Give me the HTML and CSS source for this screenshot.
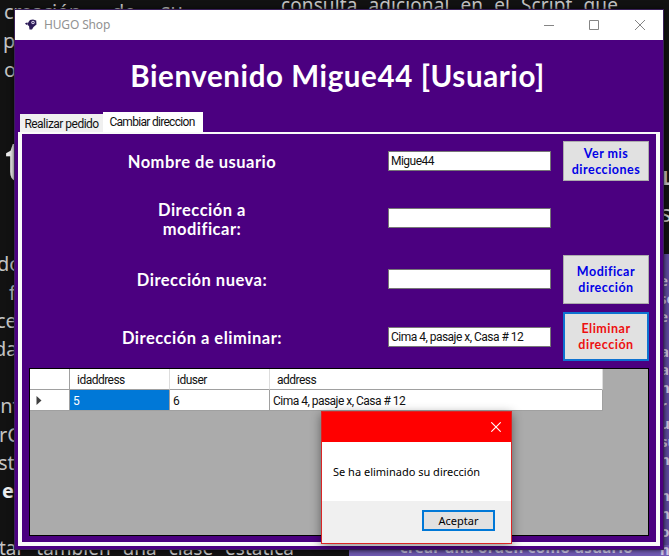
FILE: index.html
```html
<!DOCTYPE html>
<html lang="es">
<head>
<meta charset="utf-8">
<title>HUGO Shop</title>
<link rel="stylesheet" href="styles.css">
</head>
<body>
<div class="desktop">
  <div class="wallpaper"></div>
  <div class="wallpaper-foot"></div>
  <p class="doc d1">creación</p><p class="doc d2">de</p><p class="doc d3">su</p>
  <p class="doc d4">p</p><p class="doc d5">o</p>
  <p class="doc d6">consulta adicional en el Script que</p>
  <p class="doc d7">t</p>
  <p class="doc d8">do</p><p class="doc d9">f</p><p class="doc d10">ce</p><p class="doc d11">da</p>
  <p class="doc d12">int</p><p class="doc d13">rC</p><p class="doc d14">st</p><p class="doc d15">es</p>
  <p class="doc d16">tar también una clase estática</p>
  <p class="doc d17">L</p><p class="doc d18">si</p>
  <p class="doc d19">e<br>se<br>e</p>
  <p class="doc d20">a<br>a<br>n<br>r<br>u<br>su<br>n<br>i<br>n<br>n<br>o<br>n</p>
  <p class="doc d21">crear una orden como usuario</p>

  <main class="window">
    <header class="titlebar">
      <svg class="app-icon" viewBox="0 0 12 11"><path d="M5 1L8 0.5L11.2 1.5L11.5 5.5L8.5 8L7 10.5H4.5L4 7L3.5 3Z" fill="#2c1b57"/><path d="M0 4.5L1.5 3.5L2.5 4.8L1.5 6ZM2.5 3.5H4V7L2.5 6Z" fill="#2c1b57"/><circle cx="8" cy="3.5" r="1.7" fill="#ddd6ee"/><circle cx="8" cy="3.5" r="0.8" fill="#2c1b57"/></svg>
      <span class="app-name">HUGO Shop</span>
      <svg class="controls" viewBox="0 0 102 10" fill="none" stroke="#858585"><path d="M0 5.5H10M45.5 0.5H54.5V9.5H45.5ZM91 0L101 10M101 0L91 10"/></svg>
    </header>
    <h1>Bienvenido Migue44 [Usuario]</h1>
    <nav class="tabs"><span class="tab">Realizar pedido</span><span class="tab active">Cambiar direccion</span></nav>
    <section class="panel">
      <div class="form">
        <label class="l1">Nombre de usuario</label><div class="field"><span>Migue44</span></div><button class="btn b1">Ver mis<br>direcciones</button>
        <label class="l2">Dirección a<br>modificar:</label><div class="field"></div><span></span>
        <label class="l3">Dirección nueva:</label><div class="field"></div><button class="btn b2">Modificar<br>dirección</button>
        <label class="l4">Dirección a eliminar:</label><div class="field"><span>Cima 4, pasaje x, Casa # 12</span></div><button class="btn b3">Eliminar<br>dirección</button>
      </div>
      <div class="datagrid">
        <div class="row head"><span></span><span>idaddress</span><span>iduser</span><span>address</span></div>
        <div class="row"><span class="marker"><svg viewBox="0 0 6 9"><path d="M0.5 0L5.5 4.5L0.5 9Z" fill="#404040"/></svg></span><span class="selected">5</span><span>6</span><span>Cima 4, pasaje x, Casa # 12</span></div>
      </div>
    </section>
  </main>

  <section class="dialog">
    <header><svg viewBox="0 0 10 10"><path d="M0.3 0.3L9.7 9.7M9.7 0.3L0.3 9.7" stroke="#fff" fill="none" stroke-width="1.1"/></svg></header>
    <p>Se ha eliminado su dirección</p>
    <footer><button>Aceptar</button></footer>
  </section>
</div>
</body>
</html>
```
FILE: styles.css
```css
* { box-sizing: border-box; }
body { margin: 0; }
.desktop { position: relative; width: 669px; height: 556px; overflow: hidden; background: #121212; }
.wallpaper { position: absolute; left: 655px; top: 254px; width: 14px; height: 302px; background: #5f4b9f; }
.wallpaper-foot { position: absolute; left: 349px; top: 545px; width: 320px; height: 11px; background: #715bb5; }

.doc { position: absolute; margin: 0; white-space: nowrap; font: 20px/28px "Noto Sans", sans-serif; color: #c4c4c4; }
.d1 { left: 4px; top: -2px; letter-spacing: -.3px; }
.d2 { left: 112px; top: -2px; }
.d3 { left: 161px; top: -3px; }
.d4 { left: 3px; top: 27px; }
.d5 { left: 4px; top: 56px; }
.d6 { left: 281px; top: -9px; font-size: 19px; word-spacing: 6px; letter-spacing: .1px; }
.d7 { left: 5px; top: 129px; font-size: 56px; line-height: 60px; font-weight: 600; color: #eee; }
.d8 { left: -3px; top: 250px; }
.d9 { left: 9px; top: 279px; }
.d10 { left: -4px; top: 307px; }
.d11 { left: -6px; top: 335px; }
.d12 { left: -5px; top: 392px; }
.d13 { left: -1px; top: 421px; }
.d14 { left: -2px; top: 449px; }
.d15 { left: 2px; top: 477px; font-weight: 700; color: #eee; }
.d16 { left: -1px; top: 534px; font-size: 19px; word-spacing: 7px; }
.d17 { left: 662px; top: 164px; font-weight: 700; }
.d18 { left: 660px; top: 199px; font-size: 24px; }
.d19, .d20, .d21 { font-weight: 700; font-size: 15px; line-height: 18px; color: #cdc7e8; }
.d19 { left: 659px; top: 271px; }
.d20 { left: 660px; top: 342px; }
.d21 { left: 400px; top: 538px; letter-spacing: .3px; }

.window { position: absolute; left: 15px; top: 10px; width: 648px; height: 539px; display: flex; flex-direction: column; background: #4b0080; box-shadow: 0 0 0 1px #392058, 0 0 6px #000; font-family: Roboto, "Liberation Sans", sans-serif; font-size: 12px; letter-spacing: -.52px; color: #111; }
.titlebar { height: 30px; flex: none; display: flex; align-items: center; background: #fff; padding: 0 17px 0 10px; }
.app-icon { width: 12px; height: 11px; margin-top: -2px; }
.app-name { margin-left: 7px; font: 12px/16px "Noto Sans", sans-serif; letter-spacing: -.15px; color: #929292; }
.controls { width: 102px; height: 10px; margin: -1px 0 0 auto; }
h1 { height: 72px; margin: 0; padding-right: 3px; text-align: center; font: 700 29.5px/71px Lato, sans-serif; letter-spacing: .6px; color: #fff; white-space: nowrap; }
.tabs { height: 20px; flex: none; display: flex; align-items: flex-end; padding-left: 5px; }
.tab { width: 83px; height: 18px; background: #f0f0f0; text-align: center; line-height: 20px; white-space: nowrap; }
.tab.active { width: 100px; height: 20px; background: #fff; line-height: 20px; padding-right: 2px; letter-spacing: -.7px; }
.panel { margin-left: 3px; width: 642px; height: 414px; border: solid #fafafa; border-width: 2px 4px 4px; background: #4b0080; }

.form { display: grid; grid-template-columns: 354px 163px 86px; grid-template-rows: 54px 60px 62px 53px; column-gap: 12px; align-items: center; }
label { text-align: center; font: 700 16.5px/19px Lato, sans-serif; letter-spacing: .5px; color: #fff; padding: 3px 0 0 6px; }
.field { height: 20px; background: #fff; border: 1px solid #777; padding-left: 2px; line-height: 18px; white-space: nowrap; }
.btn { width: 86px; border: 1px solid #adadad; padding: 1px 0 0; background: #e1e1e1; color: #0000e6; font: 700 12.5px/16px Lato, sans-serif; letter-spacing: .5px; }
.b1 { height: 40px; }
.b2 { height: 49px; }
.b3 { height: 49px; border: 2px solid #0e72d1; color: #ed1010; }

.datagrid { margin: 5px 0 0 7px; width: 620px; height: 168px; background: #ababab; border: 1px solid #000; }
.row { display: grid; grid-template-columns: 40px 100px 100px 333px; width: 573px; height: 21px; line-height: 22px; background: #fff; }
.row span { height: 21px; border-right: 1px solid #a0a0a0; border-bottom: 1px solid #a0a0a0; padding-left: 3px; white-space: nowrap; }
.row.head span { padding-left: 7px; border-right-color: #ddd; }
.row.head span:first-child { border-right-color: #a0a0a0; }
.row .selected { background: #0078d7; color: #fff; }
.row .marker { display: flex; align-items: center; padding-left: 6px; }
.marker svg { width: 6px; height: 9px; }

.dialog { position: absolute; left: 321px; top: 411px; width: 191px; height: 133px; display: flex; flex-direction: column; border: 1px solid #db2525; background: #fff; box-shadow: 0 3px 10px rgba(0,0,0,.45); font-family: "Noto Sans", sans-serif; font-size: 11px; color: #000; }
.dialog header { height: 30px; background: #f00; display: flex; align-items: center; justify-content: flex-end; padding-right: 10px; }
.dialog header svg { width: 10px; height: 10px; }
.dialog p { margin: 0; height: 59px; padding-left: 11px; line-height: 60px; white-space: nowrap; }
.dialog footer { flex: 1; display: flex; justify-content: flex-end; align-items: flex-start; padding: 9px 16px 0 0; background: #f0f0f0; }
.dialog button { width: 73px; height: 21px; padding: 0; border: 2px solid #0078d7; background: #e1e1e1; font: inherit; line-height: 17px; color: #000; }
```
